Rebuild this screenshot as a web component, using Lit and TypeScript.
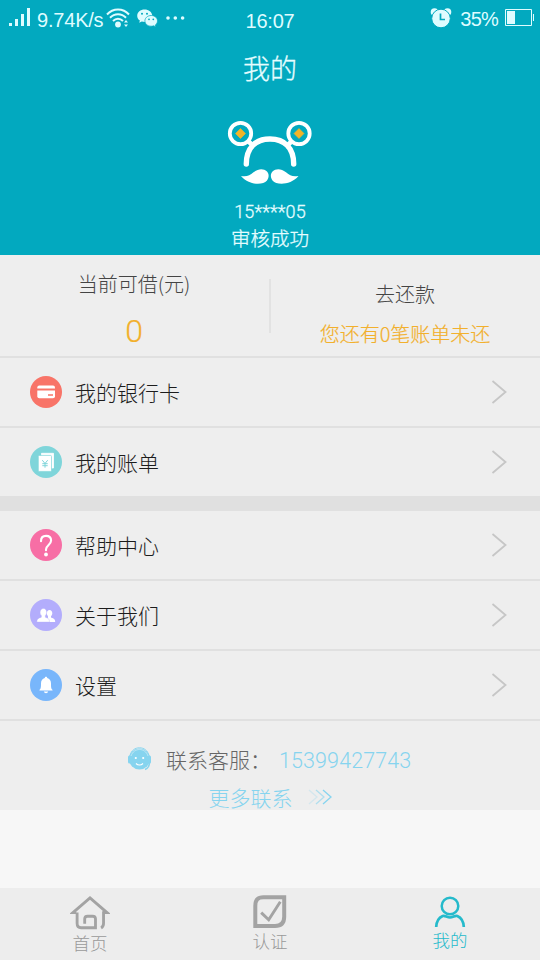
import { LitElement, html, svg, css } from "lit";
import { customElement } from "lit/decorators.js";
import { classMap } from "lit/directives/class-map.js";

const cardIcon = svg`
  <circle cx="16" cy="16" r="16" fill="#f87468"/>
  <path d="M7.300 12.600v-1.200a2 2 0 0 1 2-2h13.700a2 2 0 0 1 2 2v1.200z" fill="#fff"/>
  <path d="M7.300 14.400h17.700v5.800a2 2 0 0 1-2 2h-13.700a2 2 0 0 1-2-2z" fill="#fff"/>
  <rect x="18" y="18" width="5" height="2" fill="#f87468" opacity=".75"/>`;

const billIcon = svg`
  <circle cx="16" cy="16" r="16" fill="#7fd5da"/>
  <path d="M11.500 7.300h12v14.700h-3v-12.500h-9z" fill="#fff" stroke="#fff" stroke-width=".8" stroke-linejoin="round"/>
  <rect x="8.300" y="9.400" width="13.200" height="16" rx="1" fill="#fff" stroke="#7fd5da" stroke-width=".7"/>
  <path d="M12.300 14.200l2.700 3.300 2.700-3.300M15 17v4.700M12.300 17.700h5.400M12.300 19.700h5.400" fill="none" stroke="#7fd5da" stroke-width="1"/>`;

const helpIcon = svg`
  <circle cx="16" cy="16" r="16" fill="#f76ea5"/>
  <path d="M11 12.200c0-3.300 2-5.300 5-5.300s5.100 1.800 5.100 4.700c0 4.200-5.100 4.500-5.100 8.900v.7" fill="none" stroke="#fff" stroke-width="2.100" stroke-linecap="round"/>
  <circle cx="16" cy="25.500" r="1.900" fill="#fff"/>`;

const aboutIcon = svg`
  <circle cx="16" cy="16" r="16" fill="#b3adfc"/>
  <path d="M16.500 22.900h8.700c0-2.600-.9-3.200-4.200-4.400v-1.300c.9-.8 1.300-1.900 1.300-3 0-1.900-1.100-3.300-2.800-3.300-1.600 0-2.700 1.400-2.700 3.300 0 1.100.4 2.200 1.200 3v1.300z" fill="#fff"/>
  <path d="M6.900 23h12.600c0-3.200-1-3.700-4.200-4.800v-1.700c.9-.9 1.400-2 1.400-3.100 0-2.300-1.300-4-3.300-4s-3.300 1.700-3.300 4c0 1.100.4 2.200 1.300 3.100v1.700c-3.200 1.100-4.500 1.700-4.500 4.800z" fill="#fff" stroke="#b3adfc" stroke-width=".35"/>`;

const bellIcon = svg`
  <circle cx="16" cy="16" r="16" fill="#78b6fb"/>
  <path d="M16 7.800c.8 0 1.200.5 1.200 1.200 2.500.7 3.800 2.700 3.800 5.400 0 4 .2 5.200 1.500 6.300v.9h-13v-.9c1.300-1.100 1.500-2.300 1.500-6.300 0-2.700 1.300-4.700 3.800-5.400 0-.7.400-1.200 1.200-1.200z" fill="#fff"/>
  <path d="M13.800 22.600h4.400c-.4 1.100-1.200 1.600-2.200 1.600s-1.800-.5-2.200-1.600z" fill="#fff"/>`;

const homeIcon = svg`
  <path d="M5.500 17.600H2L20 2l18 15.600h-3.700v11.200c0 2.300-.8 4-2.600 5M6.400 17.600v11.600c0 2.900 1.500 4.400 4.200 4.400h15.200V24.400c0-2-1-3-3-3h-5.400c-2 0-3 1-3 3v5" fill="none" stroke="#a3a3a3" stroke-width="3"/>`;

const verifyIcon = svg`
  <path d="M10.500 2.300H31.200v19.500c0 6-3.200 9.200-9.200 9.200H2.300V11C2.300 5 4.500 2.300 10.500 2.300z" fill="none" stroke="#a3a3a3" stroke-width="4"/>
  <path d="M8.200 17.600l7.500 7.200L27.300 6.700" fill="none" stroke="#a3a3a3" stroke-width="2.900"/>`;

const personIcon = svg`
  <circle cx="16" cy="10" r="8.300" fill="none" stroke="#25bacb" stroke-width="2.500"/>
  <path d="M2.200 31c.3-5.500 2.500-9.300 6.500-11 2.500-.8 4.200 1.500 7.300 1.500s4.800-2.300 7.300-1.500c4 1.700 6.200 5.500 6.500 11" fill="none" stroke="#25bacb" stroke-width="2.700"/>`;

@customElement("status-bar")
class StatusBar extends LitElement {
  static styles = css`
    :host { display: flex; align-items: center; height: 36px; padding-left: 9px; padding-right: 6px;
      font-family: "Liberation Sans", sans-serif; font-size: 20px; line-height: 36px; color: #dffcff; }
    svg { display: block; flex: none; }
    .side { flex: 1; display: flex; align-items: center; height: 36px; }
    .right { justify-content: flex-end; }
    .speed { width: 67px; margin-left: 6px; letter-spacing: -0.200px; font-size: 20px; white-space: nowrap; padding-top: 3px; }
    .wifi { margin-left: 2px; }
    .chat { margin-left: 7px; }
    .dots { margin-left: 8px; }
    .time { padding-top: 6px; letter-spacing: -0.200px; margin-right: 3px; }
    .alarm { margin-right: 8px; }
    .pct { padding-top: 2px; letter-spacing: -0.800px; margin-right: 7px; }
  `;
  render() {
    return html`
      <div class="side">
        <svg width="22" height="20" viewBox="0 0 22 20" fill="#dffcff"><path d="M0 15h3v3H0zM6 11h3v7H6zM12 6h3v12h-3zM18 0h3v18h-3z"/></svg>
        <span class="speed">9.74K/s</span>
        <svg class="wifi" width="24" height="20" viewBox="0 0 24 20">
          <g fill="none" stroke="#dffcff" stroke-width="2"><path d="M1 6.500C7-.200 17-.200 23 6.500M4 9.800c4.500-4.800 11.500-4.800 16 0M7 13c3-3 7-3 10 0"/></g>
          <circle cx="12" cy="16.500" r="2.900" fill="#dffcff"/>
          <path d="M18 14.500l2-2.500 2 2.500zM18 16.500l2 2.500 2-2.500z" fill="#dffcff"/>
        </svg>
        <svg class="chat" width="21" height="19" viewBox="0 0 21 19" fill="#dffcff">
          <path d="M7.600.5C3.400.5.200 3.200.200 6.700c0 2 1 3.700 2.700 4.900l-.7 2.200 2.600-1.300c.9.200 1.900.4 2.900.4 3.700 0 7.500-2.500 7.500-6.200S11.500.5 7.600.5z"/>
          <path d="M14.200 6.500c3.500 0 6.300 2.400 6.300 5.400 0 1.700-.9 3.100-2.200 4.100l.5 1.900-2.100-1.100c-.8.300-1.600.4-2.500.4-3.500 0-6.300-2.300-6.300-5.300s2.800-5.400 6.300-5.400z" stroke="#02a9bf" stroke-width=".7"/>
          <g fill="#02a9bf"><circle cx="5" cy="4.800" r="1"/><circle cx="10" cy="4.800" r="1"/><circle cx="12" cy="10.300" r=".9"/><circle cx="16.300" cy="10.300" r=".9"/></g>
        </svg>
        <svg class="dots" width="19" height="4" viewBox="0 0 19 4" fill="#dffcff"><circle cx="2" cy="2" r="1.800"/><circle cx="9.300" cy="2" r="1.800"/><circle cx="16.600" cy="2" r="1.800"/></svg>
      </div>
      <span class="time">16:07</span>
      <div class="side right">
        <svg class="alarm" width="22" height="20" viewBox="0 0 22 20">
          <circle cx="4.500" cy="4" r="3.800" fill="#dffcff"/><circle cx="17.500" cy="4" r="3.800" fill="#dffcff"/>
          <circle cx="11" cy="10.500" r="9.300" fill="#dffcff" stroke="#02a9bf" stroke-width="1"/>
          <path d="M10.500 5.500v6h4.500" fill="none" stroke="#02a9bf" stroke-width="1.700"/>
        </svg>
        <span class="pct">35%</span>
        <svg width="29" height="18" viewBox="0 0 29 18"><path d="M.5.500h26v16H.5z" fill="none" stroke="#dffcff"/><path d="M2 2h8v13H2zM28 5h1v7h-1z" fill="#dffcff"/></svg>
      </div>`;
  }
}

@customElement("menu-row")
class MenuRow extends LitElement {
  static properties = { icon: { attribute: false }, label: {} };
  declare icon: unknown;
  declare label: string;
  static styles = css`
    :host { display: flex; align-items: center; height: 68px; padding: 0 33px 0 30px; color: #1c1c1c; font-size: 21px; line-height: 30px; }
    svg { display: block; flex: none; }
    .label { flex: 1; margin-left: 13px; padding-bottom: 1px; }
  `;
  render() {
    return html`
      <svg width="32" height="32" viewBox="0 0 32 32">${this.icon}</svg>
      <span class="label">${this.label}</span>
      <svg width="16" height="24" viewBox="0 0 16 24"><path d="M1.500 1l13 11-13 11" fill="none" stroke="#c6c6c6" stroke-width="1.800"/></svg>`;
  }
}

@customElement("app-root")
class AppRoot extends LitElement {
  static styles = css`
    :host { display: flex; flex-direction: column; width: 540px; height: 960px; overflow: hidden; background: #f7f7f7;
      font-family: "Noto Sans CJK SC", sans-serif; font-weight: 300; }
    svg { display: block; flex: none; }
    .header { height: 255px; background: #02a9bf; color: #e6fdff; display: flex; flex-direction: column; align-items: center; }
    status-bar { align-self: stretch; }
    .title { font-size: 27px; line-height: 40px; margin-top: 12px; -webkit-text-stroke: 0.300px #e6fdff; }
    .avatar { margin-top: 30px; }
    .user { font-size: 18px; line-height: 26px; margin-top: 13px; font-family: Roboto, sans-serif; letter-spacing: 0.150px; }
    .user, .state { -webkit-text-stroke: 0.300px #e6fdff; }
    .state { font-size: 19.500px; line-height: 26px; }
    .stats { display: flex; align-items: center; height: 101px; background: #eee; border-bottom: 2px solid #e0e0e0; color: #444; font-size: 20px; text-align: center; }
    .stat { flex: 1; display: flex; flex-direction: column; }
    .sep { width: 2px; height: 54px; background: #e2e2e2; }
    .left .cap { margin-top: 9px; }
    .left { padding-right: 1px; }
    .right { padding-right: 1px; }
    .cap { line-height: 30px; }
    .zero { color: #f2b02c; font-family: Roboto, sans-serif; font-size: 32px; line-height: 40px; margin-top: 12px; }
    .right .cap { margin-top: 16px; }
    .due { color: #f2b02c; line-height: 30px; margin-top: 10px; }
    .due, .zero { -webkit-text-stroke: 0.200px #f2b02c; }
    .group { background: #eee; }
    .group menu-row + menu-row { border-top: 2px solid #e0e0e0; }
    .gap { height: 15px; background: #e0e0e0; }
    .contact { height: 89px; border-top: 2px solid #e0e0e0; background: #eee; display: flex; flex-direction: column; align-items: center; font-size: 21px; line-height: 31px; color: #666; }
    .line { display: flex; align-items: center; height: 36px; flex: none; }
    .first { margin-top: 20px; margin-right: 2px; }
    .who { width: 100px; margin-left: 14px; white-space: nowrap; }
    .phone { margin-left: 13px; color: #86d4ef; width: 132px; font-size: 21.500px; letter-spacing: 0.100px; font-family: Roboto, sans-serif; padding-top: 3px; }
    .second { margin-top: 2px; }
    .more { color: #86d4ef; }
    .arrows { margin-left: 15px; }
    .nav { margin-top: auto; height: 72px; background: #ededed; display: flex; font-size: 17.500px; line-height: 24px; color: #999; }
    .tab { flex: 1; display: flex; flex-direction: column; align-items: center; padding-top: 7px; }
    .on { color: #25bacb; padding-top: 8px; }
  `;
  render() {
    return html`
      <div class="header">
        <status-bar></status-bar>
        <div class="title">我的</div>
        <svg class="avatar" width="86" height="68" viewBox="0 0 86 68">
          <g fill="none" stroke="#fff" stroke-width="3.800"><circle cx="13.500" cy="15.500" r="10.700"/><circle cx="72" cy="15.500" r="10.700"/></g>
          <path d="M19.300 46c0-16 9-25 23.700-25S66.700 30 66.700 46" fill="none" stroke="#fff" stroke-width="5.400" stroke-linecap="round"/>
          <path d="M21.500 23.500l6 5.500M64.500 23.500l-6 5.500" fill="none" stroke="#fff" stroke-width="4.500"/>
          <path d="M13.500 10.500l5 5-5 5-5-5zM72 10.500l5 5-5 5-5-5z" fill="#f2b428" stroke="#f2b428" stroke-width=".6" stroke-linejoin="round"/>
          <path d="M14 58c6 1 8.500-.500 12.500-3.700 5-3.800 10-3.800 13.500-.8 2.200 2.200 2.200 6.200-.2 9.200-3.800 4.500-17.800 4.800-25.800-4.700z" fill="#fff"/>
          <path d="M71.500 58c-6 1-8.500-.500-12.500-3.700-5-3.800-10-3.800-13.500-.8-2.200 2.200-2.200 6.200.2 9.200 3.800 4.500 17.800 4.800 25.800-4.700z" fill="#fff"/>
        </svg>
        <div class="user">15****05</div>
        <div class="state">审核成功</div>
      </div>
      <div class="stats">
        <div class="stat left"><span class="cap">当前可借(元)</span><span class="zero">0</span></div>
        <div class="sep"></div>
        <div class="stat right"><span class="cap">去还款</span><span class="due">您还有0笔账单未还</span></div>
      </div>
      <div class="group">
        <menu-row .icon=${cardIcon} label="我的银行卡"></menu-row>
        <menu-row .icon=${billIcon} label="我的账单"></menu-row>
      </div>
      <div class="gap"></div>
      <div class="group">
        <menu-row .icon=${helpIcon} label="帮助中心"></menu-row>
        <menu-row .icon=${aboutIcon} label="关于我们"></menu-row>
        <menu-row .icon=${bellIcon} label="设置"></menu-row>
      </div>
      <div class="contact">
        <div class="line first">
          <svg width="25" height="24" viewBox="0 0 25 24">
            <circle cx="12.500" cy="12" r="10.500" fill="#86d4ef"/>
            <path d="M3 9C4 3.500 8 .800 12.500.800S21 3.500 22 9" fill="none" stroke="#86d4ef"/>
            <rect x="1" y="8.500" width="3" height="8" rx="1.500" fill="#86d4ef"/><rect x="21" y="8.500" width="3" height="8" rx="1.500" fill="#86d4ef"/>
            <path d="M4 9C5.500 4.500 9 2.500 12.500 2.500s7 2 8.500 6.500" fill="none" stroke="#d3eef7" stroke-width=".7"/>
            <path d="M22.500 15c0 4-1.500 6.500-4.500 7.500" fill="none" stroke="#86d4ef" stroke-width="1.500"/>
            <path d="M9 16.500c2 2 5 2 7 0" fill="none" stroke="#fff" stroke-width="1.200"/>
            <circle cx="8.800" cy="11" r="1.100" fill="#fff"/><circle cx="16.200" cy="11" r="1.100" fill="#fff"/>
          </svg>
          <span class="who">联系客服：</span>
          <span class="phone">15399427743</span>
        </div>
        <div class="line second">
          <span class="more">更多联系</span>
          <svg class="arrows" width="24" height="16" viewBox="0 0 24 16" fill="none" stroke="#86d4ef" stroke-width="1.300">
            <path d="M1 1l8 7-8 7" opacity=".25"/><path d="M8 1l8 7-8 7" opacity=".6"/><path d="M15 1l8 7-8 7"/>
          </svg>
        </div>
      </div>
      <div class="nav">
        <div class=${classMap({ tab: true })}><svg width="40" height="36" viewBox="-1 -1 42 38">${homeIcon}</svg>首页</div>
        <div class=${classMap({ tab: true })}><svg width="34" height="34" viewBox="0 0 34 34">${verifyIcon}</svg>认证</div>
        <div class=${classMap({ tab: true, on: true })}><svg width="32" height="32" viewBox="0 0 32 32">${personIcon}</svg>我的</div>
      </div>`;
  }
}
